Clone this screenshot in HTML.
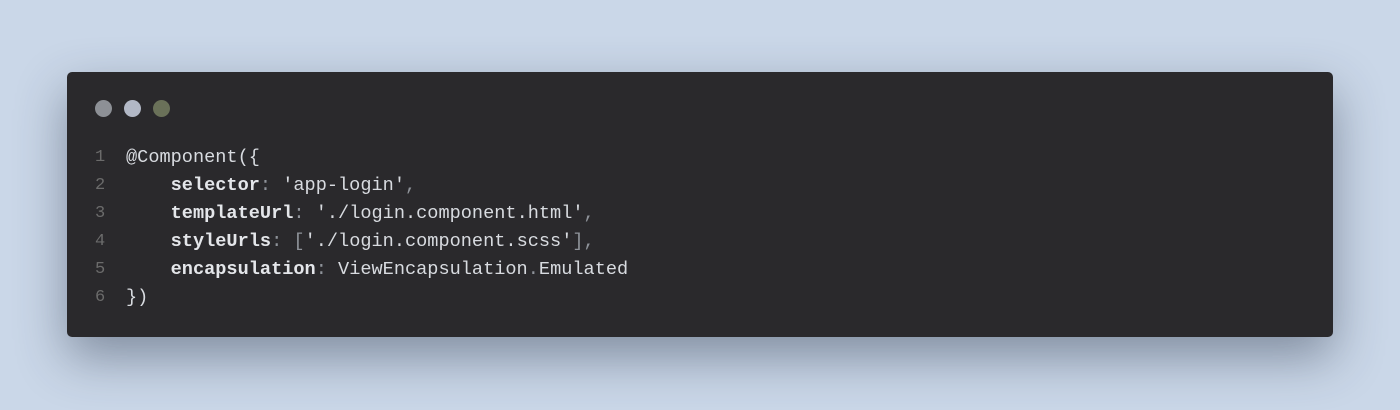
<!DOCTYPE html>
<html><head><style>
html,body{margin:0;padding:0}
body{width:1400px;height:410px;background:#cad7e8;position:relative;overflow:hidden}
.card{position:absolute;left:67px;top:72px;width:1266px;height:265px;background:#2a292c;border-radius:5px;box-shadow:0 20px 50px rgba(40,50,70,.45)}
.dot{position:absolute;top:100px;width:17px;height:17px;border-radius:50%}
.code{position:absolute;left:0;top:144px;font-family:"Liberation Mono",monospace;font-size:18.6px;line-height:28px;color:#d8dbe0;white-space:pre}
.code div{height:28px}
.ln{display:inline-block;width:126px;box-sizing:border-box;padding-left:95px;color:#6b6b6b;font-size:17px;line-height:28px;vertical-align:top}
.p{color:#8f939a}
b{font-weight:bold;color:#e4e6ea}
</style></head><body>
<div class="card"></div>
<div class="dot" style="left:95px;background:#8d9096"></div>
<div class="dot" style="left:124px;background:#b2b8c6"></div>
<div class="dot" style="left:153px;background:#6a7159"></div>
<div class="code"><div><span class="ln">1</span>@Component({</div><div><span class="ln">2</span>    <b>selector</b><span class="p">:</span> 'app-login'<span class="p">,</span></div><div><span class="ln">3</span>    <b>templateUrl</b><span class="p">:</span> './login.component.html'<span class="p">,</span></div><div><span class="ln">4</span>    <b>styleUrls</b><span class="p">: [</span>'./login.component.scss'<span class="p">],</span></div><div><span class="ln">5</span>    <b>encapsulation</b><span class="p">:</span> ViewEncapsulation<span class="p">.</span>Emulated</div><div><span class="ln">6</span>})</div></div>
</body></html>
